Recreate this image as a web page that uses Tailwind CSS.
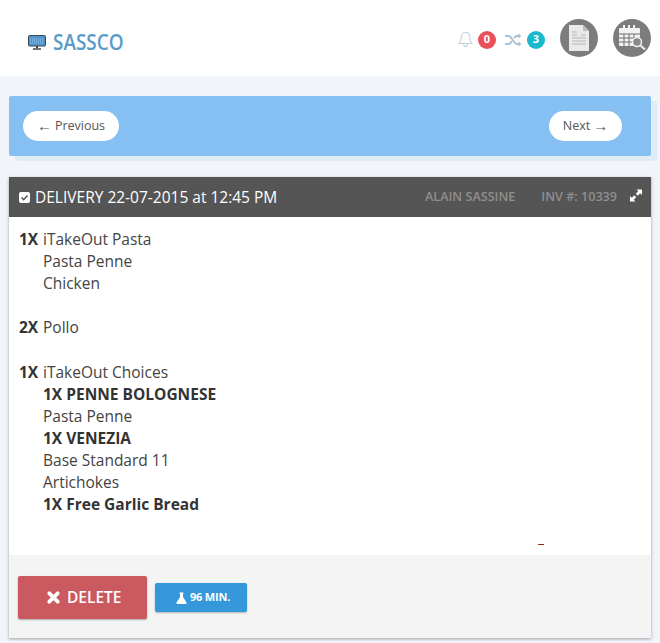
<!DOCTYPE html>
<html lang="en">
<head>
  <meta charset="UTF-8" />
  <title>Sassco</title>
  <script src="https://cdn.jsdelivr.net/npm/@tailwindcss/browser@4"></script>
</head>
<body class="bg-[#f1f4f9] font-['Open_Sans',sans-serif] text-[#333] w-[660px] h-[643px] overflow-hidden">

  <!-- top bar -->
  <header class="h-[76px] bg-white flex items-center pl-[28px] pr-[9px]">
    <svg width="18" height="15" viewBox="0 0 18 15" class="mt-[8px]">
      <rect x="0.5" y="0.5" width="17" height="10.5" rx="1" fill="#4f93cf" stroke="#3b4650"/>
      <path d="M2 4h14M2 6h14M2 8h14" stroke="#9cc7ea" stroke-width="1" stroke-dasharray="1 1"/>
      <path d="M8 11h2v2H8z" fill="#3b4650"/>
      <path d="M5 14h8" stroke="#3b4650" stroke-width="1.5"/>
    </svg>
    <span class="ml-[7px] mt-[9px] inline-block w-[71px] origin-left scale-x-90 text-[21px] font-semibold text-[#5b9bc9]">SASSCO</span>

    <svg width="15" height="17" viewBox="0 0 16 18" fill="none" stroke="#c3d0dc" stroke-width="1.2" class="ml-auto mt-[3px]">
      <path d="M8 1.500c-3 0-4.600 2.300-4.600 5 0 3.600-.8 5.200-2.400 6.800h14c-1.600-1.600-2.400-3.200-2.400-6.800 0-2.700-1.600-5-4.600-5z"/>
      <path d="M6 14c0 1.500 1 2.500 2 2.500s2-1 2-2.500"/>
    </svg>
    <span class="ml-[5px] mt-[3px] w-[18px] h-[18px] rounded-full bg-[#e8505b] text-white text-[11px] font-bold flex items-center justify-center">0</span>

    <svg width="17" height="14" viewBox="0 0 17 14" fill="none" stroke="#a9c0d2" stroke-width="1.8" class="ml-[9px] mt-[3px]">
      <path d="M0 3h3.500c3.500 0 5 8 8.500 8H14M0 11h3.500c1.500 0 2.500-1.500 3.200-3M9 5c.7-1 1.500-2 3-2h2"/>
      <path d="M13.500 0.500l3 2.500-3 2.500zM13.500 8.500l3 2.500-3 2.500z" fill="#a9c0d2" stroke="none"/>
    </svg>
    <span class="ml-[5px] mt-[3px] w-[18px] h-[18px] rounded-full bg-[#1ab8cc] text-white text-[11px] font-bold flex items-center justify-center">3</span>

    <span class="ml-[15px] w-[38px] h-[38px] rounded-full bg-[#7c7c7c] flex items-center justify-center">
      <svg width="22" height="28" viewBox="0 0 22 28">
        <path d="M1 1h14l6 6v20H1z" fill="#e9e9e9"/>
        <path d="M15 1v6h6z" fill="#bdbdbd"/>
        <path d="M4 8h5M13 11h5M4 11h5M4 14h14M4 17h14M4 20h14" stroke="#b5b5b5" stroke-width="1"/>
      </svg>
    </span>
    <span class="ml-[15px] w-[38px] h-[38px] rounded-full bg-[#7c7c7c] flex items-center justify-center">
      <svg width="32" height="30" viewBox="0 0 32 30">
        <rect x="3" y="5" width="21" height="18" rx="1" fill="#f2f2f2"/>
        <path d="M8 2v5M13 2v5M18 2v5" stroke="#f2f2f2" stroke-width="2"/>
        <path d="M3 11h21M3 15h21M3 19h21M8 11v12M13 11v12M18 11v12" stroke="#6e6e6e" stroke-width="1"/>
        <circle cx="21" cy="19" r="4.500" fill="#8a8a8a" stroke="#f2f2f2" stroke-width="1.500"/>
        <path d="M24.500 22.500l4.500 4" stroke="#f2f2f2" stroke-width="2"/>
      </svg>
    </span>
  </header>

  <main class="pt-[20px] pl-[9px]">
    <!-- pager -->
    <div class="w-[642px] h-[60px] rounded-[2px] bg-[#86c0f3] shadow-[6px_5px_0_#dfebf6] flex items-center justify-between pl-[14px] pr-[29px]">
      <a class="h-[30px] w-[96px] rounded-full bg-white text-[12.500px] text-[#555] flex items-center justify-center"><span class="font-['Liberation_Sans'] text-[15px] mr-[3px]">←</span>Previous</a>
      <a class="h-[30px] w-[73px] rounded-full bg-white text-[12.500px] text-[#555] flex items-center justify-center">Next<span class="font-['Liberation_Sans'] text-[15px] ml-[3px]">→</span></a>
    </div>

    <!-- order card -->
    <section class="mt-[21px] w-[642px] shadow-[0_1px_3px_rgba(0,0,0,0.35)]">
      <div class="h-[40px] bg-[#555] flex items-center pl-[10px] pr-[9px] text-white">
        <svg width="11" height="11" viewBox="0 0 11 11" class="mr-[5px] mt-[1px]">
          <rect width="11" height="11" rx="2" fill="#fff"/>
          <path d="M2.500 5.500l2.200 2.200 3.800-4.200" fill="none" stroke="#555" stroke-width="1.600"/>
        </svg>
        <span class="text-[15.500px] mt-[1px]">DELIVERY 22-07-2015 at 12:45 PM</span>
        <span class="ml-auto text-[12.600px] font-semibold text-[#8f8f8f]">ALAIN SASSINE</span>
        <span class="ml-[26px] text-[12.600px] font-semibold text-[#8f8f8f]">INV #: 10339</span>
        <svg width="12" height="13" viewBox="0 0 12 12" class="ml-[13px] mb-[3px]" fill="#fff">
          <path d="M6.500 0H12v5.500l-1.800-1.800-2.500 2.500-1.900-1.900 2.500-2.500zM5.500 12H0V6.500l1.800 1.800 2.500-2.500 1.900 1.900-2.500 2.500z"/>
        </svg>
      </div>

      <div class="relative h-[338px] bg-white pt-[11px] pl-[10px] text-[15.500px] leading-[22.100px] text-[#444]">
        <div class="flex"><b class="w-[24px] text-[#333]">1X</b><span>iTakeOut Pasta</span></div>
        <div class="pl-[24px]">Pasta Penne</div>
        <div class="pl-[24px]">Chicken</div>
        <div class="h-[22.100px]"></div>
        <div class="flex"><b class="w-[24px] text-[#333]">2X</b><span>Pollo</span></div>
        <div class="h-[22.100px]"></div>
        <div class="flex"><b class="w-[24px] text-[#333]">1X</b><span>iTakeOut Choices</span></div>
        <div class="pl-[24px] font-bold text-[#333]">1X PENNE BOLOGNESE</div>
        <div class="pl-[24px]">Pasta Penne</div>
        <div class="pl-[24px] font-bold text-[#333]">1X VENEZIA</div>
        <div class="pl-[24px]">Base Standard 11</div>
        <div class="pl-[24px]">Artichokes</div>
        <div class="pl-[24px] font-bold text-[#333]">1X Free Garlic Bread</div>
        <span class="absolute left-[529px] top-[327px] w-[6px] h-[1px] bg-[#8a2a20]"></span>
      </div>

      <div class="h-[83px] bg-[#f4f4f4] flex items-center gap-[8px] pl-[9px] pt-[2px]">
        <button class="w-[129px] h-[43px] rounded-[2px] bg-[#cb5a60] shadow-[0_1px_2px_rgba(0,0,0,0.3)] text-white text-[15.500px] font-semibold flex items-center gap-[7px] pl-[29px]">
          <svg width="13" height="13" viewBox="0 0 14 14"><path d="M2.500 2.500l9 9M11.500 2.500l-9 9" stroke="#fff" stroke-width="4" stroke-linecap="round"/></svg>
          DELETE
        </button>
        <button class="w-[92px] h-[29px] rounded-[2px] bg-[#3498db] shadow-[0_1px_2px_rgba(0,0,0,0.25)] text-white text-[11px] font-bold tracking-[-0.2px] flex items-center gap-[3px] pl-[21px]">
          <svg width="11" height="12" viewBox="0 0 11 12"><path d="M3.500 0.500h4v1H7V5l3.500 5.500c.4.700 0 1.500-.8 1.500H1.300c-.8 0-1.200-.8-.8-1.500L4 5V1.500h-.5z" fill="#fff"/></svg>
          96 MIN.
        </button>
      </div>
    </section>
  </main>
</body>
</html>
